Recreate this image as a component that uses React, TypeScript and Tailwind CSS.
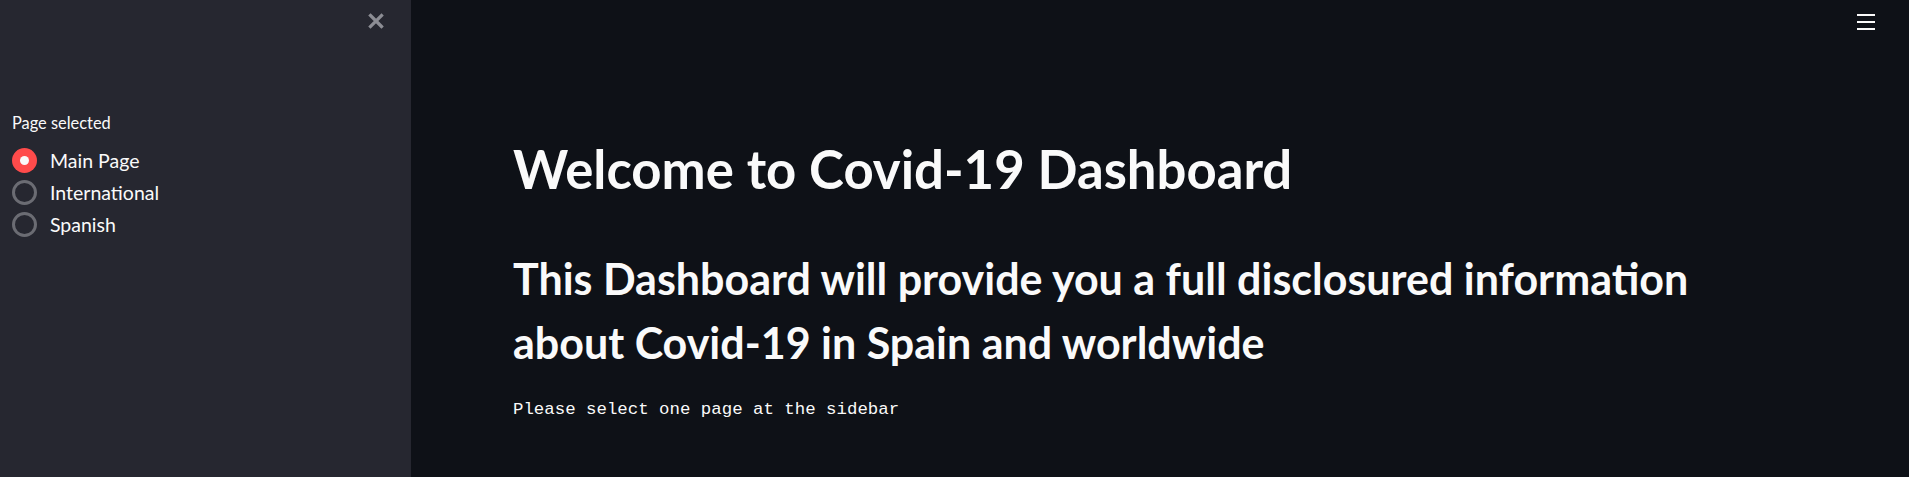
import { useState } from 'react'

const pages = ['Main Page', 'International', 'Spanish']

export default function App() {
  const [page, setPage] = useState('Main Page')

  return (
    <div className="flex h-[477px] w-full overflow-hidden bg-[#0e1117] text-[#fafafa] font-['Lato',sans-serif]">
      <aside className="relative w-[411px] shrink-0 bg-[#262730] px-[12px] pt-[111px]">
        <button className="absolute left-[368px] top-[13px] text-[#8c8d94]" aria-label="Close sidebar">
          <svg width="16" height="16" viewBox="0 0 16 16">
            <path d="M2.5 2.5 L13.5 13.5 M13.5 2.5 L2.5 13.5" stroke="currentColor" strokeWidth="3.2" strokeLinecap="square" />
          </svg>
        </button>
        <p className="text-[16.4px] leading-[24px]">Page selected</p>
        <div className="mt-[13px] flex flex-col gap-[7px]">
          {pages.map((p) => (
            <label key={p} className="flex cursor-pointer items-center gap-[13px]" onClick={() => setPage(p)}>
              {page === p ? (
                <span className="flex h-[25px] w-[25px] items-center justify-center rounded-full bg-[#ff4b4b]">
                  <span className="h-[9px] w-[9px] rounded-full bg-[#fafafa]" />
                </span>
              ) : (
                <span className="h-[25px] w-[25px] rounded-full border-[3px] border-[#6b6c73]" />
              )}
              <span className="text-[19.5px] leading-[25px]">{p}</span>
            </label>
          ))}
        </div>
      </aside>

      <main className="relative flex-1 pl-[102px] pt-[136px]">
        <button className="absolute right-[34px] top-[14px] flex flex-col gap-[5px]" aria-label="Menu">
          <span className="h-[2px] w-[18px] bg-[#fafafa]" />
          <span className="h-[2px] w-[18px] bg-[#fafafa]" />
          <span className="h-[2px] w-[18px] bg-[#fafafa]" />
        </button>
        <h1 className="text-[52.7px] font-bold leading-[65px]">Welcome to Covid-19 Dashboard</h1>
        <h2 className="mt-[46px] text-[43px] font-bold leading-[64px]">
          This Dashboard will provide you a full disclosured information
          <br />
          about Covid-19 in Spain and worldwide
        </h2>
        <pre className="mt-[23px] font-['Liberation_Mono',monospace] text-[17.4px] leading-[24px]">
          Please select one page at the sidebar
        </pre>
      </main>
    </div>
  )
}
